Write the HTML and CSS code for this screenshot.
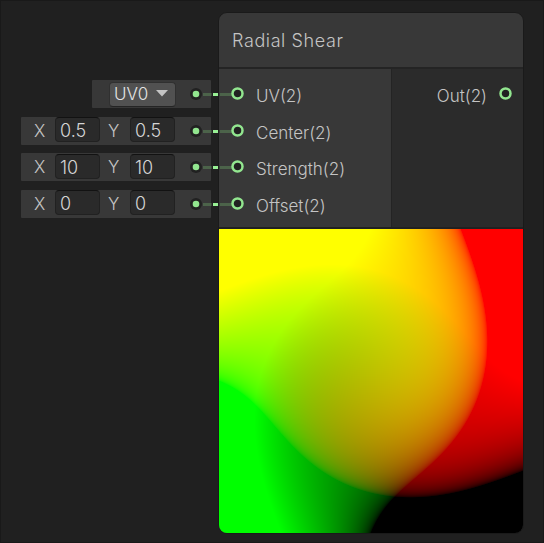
FILE: index.html
```
<!DOCTYPE html>
<html lang="en">
<head>
<meta charset="utf-8">
<title>Radial Shear</title>
<link rel="stylesheet" href="styles.css">
</head>
<body>
<main class="graph">
  <section class="inputs">
    <div class="slot"><div class="box"><span class="select">UV0<svg class="arrow" viewBox="0 0 12 7"><path d="M0 0H12L6 6.5Z"/></svg></span><svg class="dot" viewBox="0 0 14 14"><circle cx="7" cy="7" r="6"/><circle class="fill" cx="7" cy="7" r="3.3"/></svg></div><i class="edge"></i></div>
    <div class="slot"><div class="box"><span class="axis">X</span><span class="field">0.5</span><span class="axis second">Y</span><span class="field">0.5</span><svg class="dot" viewBox="0 0 14 14"><circle cx="7" cy="7" r="6"/><circle class="fill" cx="7" cy="7" r="3.3"/></svg></div><i class="edge"></i></div>
    <div class="slot"><div class="box"><span class="axis">X</span><span class="field">10</span><span class="axis second">Y</span><span class="field">10</span><svg class="dot" viewBox="0 0 14 14"><circle cx="7" cy="7" r="6"/><circle class="fill" cx="7" cy="7" r="3.3"/></svg></div><i class="edge"></i></div>
    <div class="slot"><div class="box"><span class="axis">X</span><span class="field">0</span><span class="axis second">Y</span><span class="field">0</span><svg class="dot" viewBox="0 0 14 14"><circle cx="7" cy="7" r="6"/><circle class="fill" cx="7" cy="7" r="3.3"/></svg></div><i class="edge"></i></div>
  </section>
  <article class="node">
    <header class="title">Radial Shear</header>
    <div class="ports">
      <div class="in">
        <div class="port"><svg class="ring" viewBox="0 0 13 13"><circle cx="6.5" cy="6.5" r="5"/></svg><span>UV(2)</span></div>
        <div class="port"><svg class="ring" viewBox="0 0 13 13"><circle cx="6.5" cy="6.5" r="5"/></svg><span>Center(2)</span></div>
        <div class="port"><svg class="ring" viewBox="0 0 13 13"><circle cx="6.5" cy="6.5" r="5"/></svg><span>Strength(2)</span></div>
        <div class="port"><svg class="ring" viewBox="0 0 13 13"><circle cx="6.5" cy="6.5" r="5"/></svg><span>Offset(2)</span></div>
      </div>
      <div class="out">
        <div class="port"><span>Out(2)</span><svg class="ring" viewBox="0 0 13 13"><circle cx="6.5" cy="6.5" r="5"/></svg></div>
      </div>
    </div>
    <canvas class="preview" width="304" height="304"></canvas>
  </article>
</main>
<script src="preview.js"></script>
</body>
</html>
```
FILE: styles.css
```
* { box-sizing: border-box; }
body {
  margin: 0;
  background: #202020;
  font-family: Inter, sans-serif;
  font-size: 17px;
  font-weight: 330;
  color: #c4c4c4;
}
.graph {
  display: flex;
  width: 544px;
  height: 543px;
  padding: 12px 0 0 19.5px;
  border: 1px solid #191919;
  overflow: hidden;
}
.inputs {
  width: 197.5px;
  flex: none;
  padding-top: 67px;
  display: flex;
  flex-direction: column;
  gap: 8.5px;
}
.slot {
  height: 28px;
  display: flex;
  justify-content: flex-end;
  padding-right: 7px;
  position: relative;
}
.box {
  width: 191px;
  height: 28px;
  background: #383838;
  border-radius: 1px;
  display: flex;
  align-items: center;
  padding-left: 13.5px;
}
.slot:first-child .box { width: 119px; padding-left: 17px; }
.axis { width: 21px; font-size: 17px; }
.axis.second { width: 22px; margin-left: 8px; }
.field {
  width: 45px;
  height: 25px;
  margin-top: -2px;
  padding-left: 4px;
  background: #2a2a2a;
  border: 1px solid #212121;
  border-top-color: #121212;
  border-radius: 4px;
  font-size: 18px;
  line-height: 25px;
  color: #d4d4d4;
}
.select {
  width: 67px;
  height: 25px;
  display: flex;
  align-items: center;
  justify-content: space-between;
  padding: 0 7px 1px 4px;
  background: #515151;
  border: 1px solid #303030;
  border-bottom-color: #242424;
  border-radius: 4px;
  font-size: 17px;
  color: #e4e4e4;
}
.arrow { width: 12px; height: 7px; fill: #c4c4c4; }
.dot {
  width: 14px;
  height: 14px;
  margin: 0 8px 0 auto;
  fill: #212121;
}
.dot .fill { fill: #92e68f; }
.edge {
  position: absolute;
  z-index: 2;
  left: 182.5px;
  top: 13px;
  width: 31px;
  height: 3px;
  background: linear-gradient(90deg, #4c634a 8px, #202020 9px 10px, #98ef94 10px 15px, #202020 15px 16px, #4c634a 17px);
}
.node {
  width: 306px;
  flex: none;
  height: 522px;
  border: 1px solid #1a1a1a;
  border-radius: 9px;
  overflow: hidden;
  margin-top: -1px;
  background: #383838;
}
.title {
  height: 56px;
  padding-left: 13px;
  line-height: 55px;
  font-size: 18px;
  letter-spacing: .6px;
  border-bottom: 2px solid #242424;
}
.ports {
  height: 160px;
  display: flex;
  border-bottom: 2px solid #212121;
}
.in {
  width: 172.5px;
  padding: 9px 0 0 12px;
  border-right: 1px solid #242424;
}
.out { flex: 1; padding: 9px 11.5px 0 0; background: #2b2b2b; }
.port { height: 36.5px; display: flex; align-items: flex-start; }
.port span { line-height: 37px; margin-top: .2px; }
.ring {
  width: 13px;
  height: 13px;
  margin: 9px 12px 0 0;
  fill: #212121;
  stroke: #92e68f;
  stroke-width: 2.5;
  position: relative;
  z-index: 3;
}
.out .port { justify-content: flex-end; }
.out .ring { margin: 9px 0 0 11.5px; }
.preview { display: block; width: 304px; height: 304px; }
```
FILE: preview.js
```
const canvas = document.querySelector('.preview');
const ctx = canvas.getContext('2d');
const size = canvas.width;
const image = ctx.createImageData(size, size);
const strength = 10;

function toGamma(v) {
  v = Math.min(1, Math.max(0, v));
  return 255 * (v <= 0.0031308 ? 12.92 * v : 1.055 * Math.pow(v, 1 / 2.4) - 0.055);
}

for (let row = 0; row < size; row++) {
  for (let col = 0; col < size; col++) {
    const u = (col + 0.5) / size;
    const v = 1 - (row + 0.5) / size;
    const dx = u - 0.5;
    const dy = v - 0.5;
    const shear = (dx * dx + dy * dy) * strength;
    const i = (row * size + col) * 4;
    image.data[i] = toGamma(u + dy * shear);
    image.data[i + 1] = toGamma(v - dx * shear);
    image.data[i + 3] = 255;
  }
}
ctx.putImageData(image, 0, 0);
```
